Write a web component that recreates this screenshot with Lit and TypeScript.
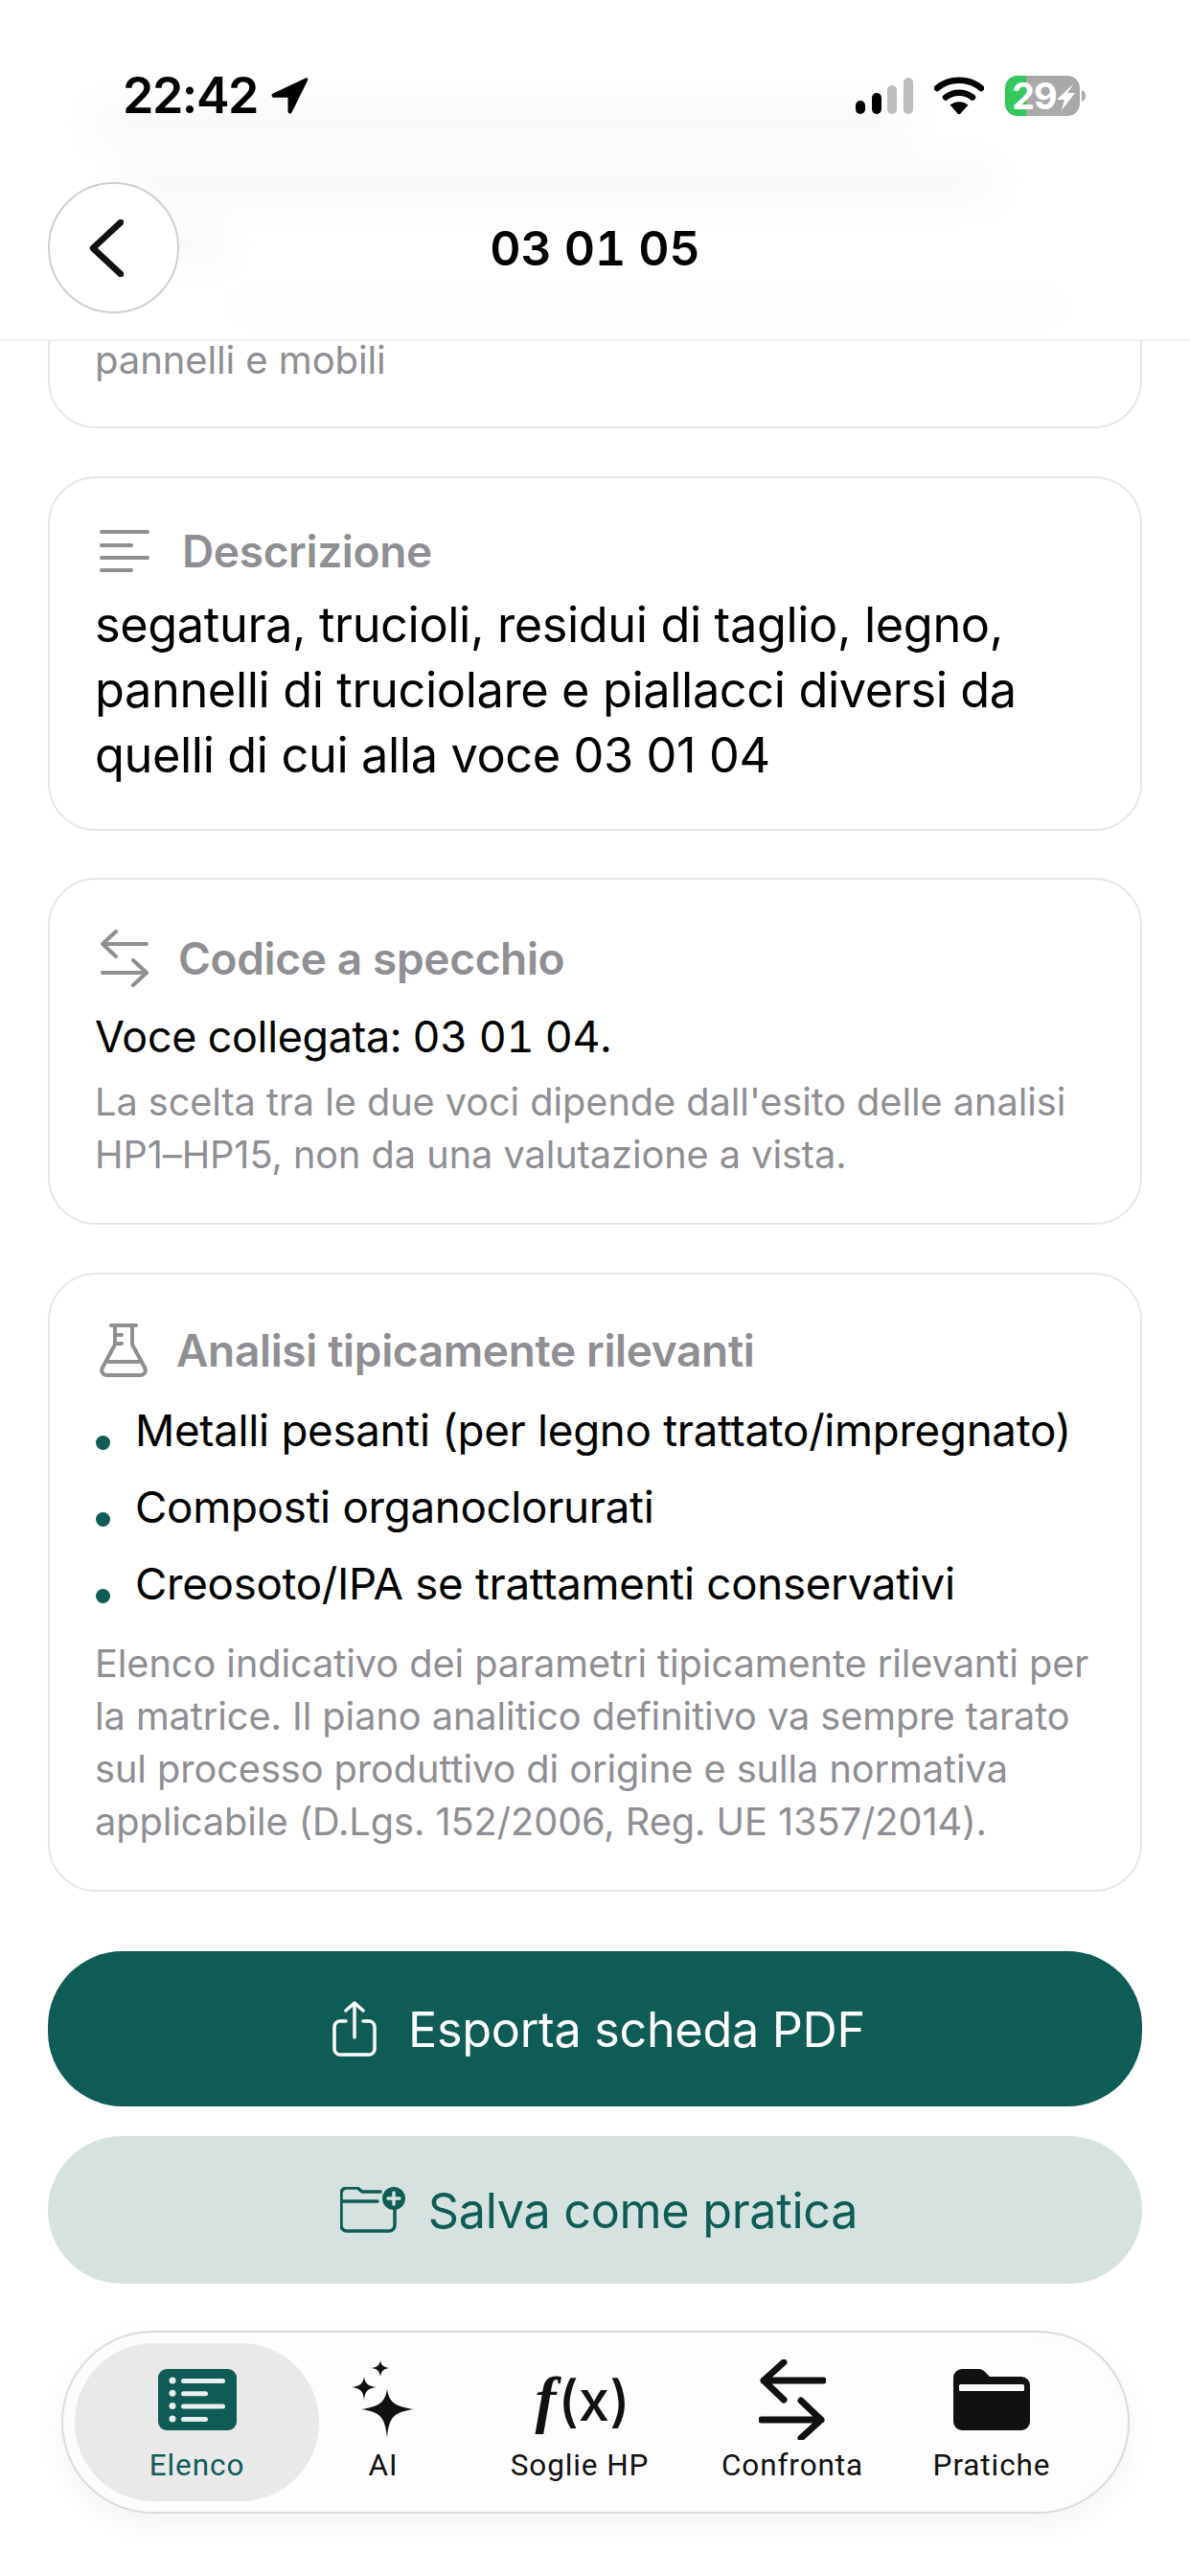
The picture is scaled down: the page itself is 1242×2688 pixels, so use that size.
import { LitElement, html, css, svg } from "lit";
import { customElement } from "lit/decorators.js";

@customElement("app-root")
export class AppRoot extends LitElement {
  static styles = css`
    :host { display: block; width: 1242px; height: 2688px; overflow: hidden; background: #fff; position: relative;
      font-family: Inter, "Liberation Sans", sans-serif; color: #000; }
    * { box-sizing: border-box; }
    svg { display: block; flex: none; }
    header { position: relative; height: 356px; border-bottom: 2px solid #eeeeef; background: #fff; overflow: hidden; }
    .ghost { position: absolute; background: rgba(0,0,0,.035); border-radius: 20px; filter: blur(20px); height: 30px; }
    .g1 { left: 95px; top: 113px; width: 860px; }
    .g2 { left: 120px; top: 175px; width: 920px; }
    .g3 { left: 100px; top: 238px; width: 140px; }
    .g4 { left: 230px; top: 305px; width: 890px; opacity: .35; }
    .status { position: relative; display: flex; justify-content: space-between; align-items: center; height: 42px; margin-top: 79px; padding: 0 109px 0 128px; }
    .time { display: flex; align-items: center; gap: 13px; font-size: 52px; font-weight: 600; letter-spacing: -1.5px; line-height: 42px; }
    .sys { display: flex; align-items: center; gap: 22px; }
    .nav { position: relative; display: grid; grid-template-columns: 137px 1fr 137px; align-items: center; margin: 69px 50px 0; }
    .back { width: 137px; height: 137px; border-radius: 50%; border: 2px solid #cfcfd2; background: rgba(255,255,255,.85); display: flex; align-items: center; justify-content: center; padding-right: 16px; }
    .title { text-align: center; font-size: 50px; font-weight: 600; letter-spacing: -.2px; font-variant-numeric: tabular-nums; }
    main { display: flex; flex-direction: column; padding: 0 50px; }
    .card { border: 2px solid #e6e6e8; border-radius: 50px; padding: 0 47px; background: #fff; }
    .stub { height: 93px; border-top: none; border-radius: 0 0 50px 50px; font-size: 40px; line-height: 43px; color: #8e8e93; margin-top: -2px; letter-spacing: -.1px; margin-bottom: 50px; }
    .c2 { height: 370px; padding-top: 44px; margin-bottom: 49px; }
    .c3 { height: 362px; padding-top: 50px; margin-bottom: 50px; }
    .c4 { height: 646px; padding-top: 47px; margin-bottom: 62px; }
    .head { display: flex; align-items: center; height: 64px; font-size: 46px; font-weight: 600; color: #8e8e93; letter-spacing: -.35px; }
    .head svg { margin-left: 5px; }
    .big { font-size: 50.5px; line-height: 68px; margin-top: 11px; letter-spacing: -.4px; white-space: nowrap; }
    .mid { font-size: 44.8px; line-height: 56px; margin-top: 22px; letter-spacing: -.3px; font-variant-numeric: tabular-nums; white-space: nowrap; }
    .small { font-size: 39.7px; line-height: 55px; color: #8e8e93; letter-spacing: -.05px; white-space: nowrap; }
    .c3 .small { margin-top: 13px; }
    ul { list-style: none; margin: 11px 0 0; padding: 0; }
    li { display: flex; height: 80px; align-items: center; font-size: 45.7px; letter-spacing: -.3px; position: relative; padding-left: 42px; }
    li::before { content: ""; position: absolute; left: 1px; top: 46px; width: 15px; height: 15px; border-radius: 50%; background: #0f5c56; }
    .c4 .small { margin-top: 17px; }
    .btn { display: flex; align-items: center; justify-content: center; border-radius: 78px; font-size: 50.3px; letter-spacing: -.3px; padding-left: 8px; }
    .primary { height: 162px; background: #0f5c56; color: #fff; gap: 33px; margin-bottom: 31px; }
    .secondary { height: 154px; background: #d5e2e0; color: #0f5c56; gap: 24px; margin-bottom: 49px; }
    .tabs { margin: 0 13px 0 14px; height: 191px; border-radius: 96px; border: 2px solid #dcdcde; display: grid; grid-template-columns: 255px 134px 276px 168px 248px; align-items: stretch; padding: 11px 0 11px 12px; background: #fdfdfd; box-shadow: 0 10px 30px rgba(0,0,0,.05), inset 0 0 24px rgba(0,0,0,.015); }
    .tab { display: flex; flex-direction: column; align-items: center; font-family: Roboto, Inter, sans-serif; font-weight: 450; font-size: 31.5px; letter-spacing: .9px; color: #111; border-radius: 82px; }
    .tab.on { background: #e9e9ea; color: #0f5c56; }
    .ico { height: 100px; display: flex; align-items: center; justify-content: center; margin-top: 9px; }
    .lab { line-height: 36px; margin-top: 1px; }
    .fx { font-size: 58px; font-family: Inter, sans-serif; font-weight: 500; letter-spacing: 0; color: #111; line-height: 1; padding-left: 6px; }
    .fx i { font-family: "Liberation Serif", serif; font-weight: 700; font-size: 66px; margin-right: 2px; }
    .b { position: relative; width: 84px; height: 42px; }
    .b29 { position: absolute; left: 7px; top: 0; line-height: 42px; font-size: 38px; font-weight: 700; color: #fff; letter-spacing: -1px; }
  `;

  render() {
    return html`
      <header>
        <div class="ghost g1"></div><div class="ghost g2"></div><div class="ghost g3"></div><div class="ghost g4"></div>
        <div class="status">
          <div class="time">22:42
            <svg width="40" height="40" viewBox="0 0 40 40"><path d="M37 1.500 3 17.500c-2.400 1.200-1.600 4.300 1 4.300h14.500V36c0 2.800 3 3.400 4.200 1L39 4c.9-1.900-.2-3.300-2-2.500Z" fill="#000"/></svg>
          </div>
          <div class="sys">
            <svg width="60" height="38" viewBox="0 0 60 38">
              <rect x="0" y="24" width="10" height="14" rx="5" fill="#000"/>
              <rect x="17" y="16" width="10" height="22" rx="5" fill="#000"/>
              <rect x="33" y="8" width="10" height="30" rx="5" fill="#bdbdbd"/>
              <rect x="50" y="0" width="10" height="38" rx="5" fill="#bdbdbd"/>
            </svg>
            <svg width="52" height="40" viewBox="0 0 52 40" fill="none">
              <path d="M3 12C16 1 36 1 49 12" stroke="#000" stroke-width="6.500" stroke-linecap="round"/>
              <path d="M12 21.500C20 15 32 15 40 21.500" stroke="#000" stroke-width="6.500" stroke-linecap="round"/>
              <path d="M16.500 29.500C22 25 30 25 35.500 29.500L27.500 38.500c-.9.9-2.100.9-3 0Z" fill="#000"/>
            </svg>
            <div class="b">
              <svg width="84" height="42" viewBox="0 0 84 42">
                <defs><clipPath id="bc"><rect width="78" height="42" rx="13"/></clipPath></defs>
                <g clip-path="url(#bc)"><rect width="78" height="42" fill="#a9a9a9"/><rect width="22" height="42" fill="#34c759"/></g>
                <path d="M80 15c3 1 4 3.500 4 6s-1 5-4 6Z" fill="#a9a9a9"/>
                <path d="M72 8 54 25h8l-3 11 14-18h-8Z" fill="#fff"/>
              </svg>
              <span class="b29">29</span>
            </div>
          </div>
        </div>
        <div class="nav">
          <div class="back">
            <svg width="36" height="60" viewBox="0 0 36 60" fill="none"><path d="M33 3 4 30l29 27" stroke="#111" stroke-width="6.500" stroke-linecap="round" stroke-linejoin="round"/></svg>
          </div>
          <div class="title">03 01 05</div>
          <div></div>
        </div>
      </header>
      <main>
        <section class="card stub">pannelli e mobili</section>
        <section class="card c2">
          <div class="head" style="gap:34px">
            <svg width="52" height="44" viewBox="0 0 52 44" stroke="#8e8e93" stroke-width="4" stroke-linecap="round"><path d="M2 2h48M2 16h31M2 29h48M2 42h31"/></svg>
            Descrizione
          </div>
          <div class="big">segatura, trucioli, residui di taglio, legno,<br>pannelli di truciolare e piallacci diversi da<br>quelli di cui alla voce 03 01 04</div>
        </section>
        <section class="card c3">
          <div class="head" style="gap:30px">
            <svg width="52" height="60" viewBox="0 0 52 60" fill="none" stroke="#8e8e93" stroke-width="4" stroke-linecap="round" stroke-linejoin="round"><path d="M17 2 3 15l14 13M3 15h46M35 32l14 13-14 13M49 45H3"/></svg>
            Codice a specchio
          </div>
          <div class="mid">Voce collegata: 03 01 04.</div>
          <div class="small">La scelta tra le due voci dipende dall'esito delle analisi<br>HP1–HP15, non da una valutazione a vista.</div>
        </section>
        <section class="card c4">
          <div class="head" style="gap:30px">
            <svg width="50" height="56" viewBox="0 0 50 56" fill="none" stroke="#8e8e93" stroke-width="4" stroke-linecap="round" stroke-linejoin="round"><path d="M12 2h26M16 2v20L3 46c-2 4 0 8 5 8h34c5 0 7-4 5-8L34 22V2M16 12h7M16 21h7M9 40h32" /></svg>
            Analisi tipicamente rilevanti
          </div>
          <ul>
            <li>Metalli pesanti (per legno trattato/impregnato)</li>
            <li>Composti organoclorurati</li>
            <li>Creosoto/IPA se trattamenti conservativi</li>
          </ul>
          <div class="small">Elenco indicativo dei parametri tipicamente rilevanti per<br>la matrice. Il piano analitico definitivo va sempre tarato<br>sul processo produttivo di origine e sulla normativa<br>applicabile (D.Lgs. 152/2006, Reg. UE 1357/2014).</div>
        </section>
        <div class="btn primary">
          <svg width="46" height="58" viewBox="0 0 46 58" fill="none" stroke="#fff" stroke-width="3.500" stroke-linecap="round" stroke-linejoin="round"><path d="M14 21H8a6 6 0 0 0-6 6v23a6 6 0 0 0 6 6h30a6 6 0 0 0 6-6V27a6 6 0 0 0-6-6h-6M23 38V2M14 10l9-8 9 8"/></svg>
          Esporta scheda PDF
        </div>
        <div class="btn secondary">
          <svg width="68" height="48" viewBox="0 0 68 48" fill="none">
            <path d="M42 5H23l-5-4H7a6 6 0 0 0-6 6v33a6 6 0 0 0 6 6h44a6 6 0 0 0 6-6V24M1 15h38" stroke="#0f5c56" stroke-width="3.500" stroke-linecap="round" stroke-linejoin="round"/>
            <circle cx="56" cy="12" r="12" fill="#0f5c56"/>
            <path d="M56 6v12M50 12h12" stroke="#d5e2e0" stroke-width="3.500" stroke-linecap="round"/>
          </svg>
          Salva come pratica
        </div>
        <nav class="tabs">
          <div class="tab on">
            <div class="ico">
              <svg width="82" height="64" viewBox="0 0 82 64">
                <rect width="82" height="64" rx="9" fill="#0f5c56"/>
                ${[0, 1, 2, 3].map((i) => svg`<circle cx="15" cy="${12 + i * 13.3}" r="3.500" fill="#e9eeee"/><rect x="24" y="${10 + i * 13.3}" width="${i % 2 ? 28 : 46}" height="5" rx="2.500" fill="#e9eeee"/>`)}
              </svg>
            </div>
            <div class="lab">Elenco</div>
          </div>
          <div class="tab">
            <div class="ico">
              <svg width="66" height="82" viewBox="0 0 66 82" fill="#111">
                <path d="M37 30c2 13 7 18 28 21-21 3-26 8-28 30-2-22-7-27-27-30 20-3 25-8 27-21Z"/>
                <path d="M13 17c1 7 4 10 13 11-9 1-12 4-13 13-1-9-4-12-13-13 9-1 12-4 13-11Z"/>
                <path d="M30 0c1 5 3 7 9 8-6 1-8 3-9 9-1-6-3-8-9-9 6-1 8-3 9-8Z"/>
              </svg>
            </div>
            <div class="lab">AI</div>
          </div>
          <div class="tab">
            <div class="ico fx"><span><i>f</i>(x)</span></div>
            <div class="lab">Soglie HP</div>
          </div>
          <div class="tab">
            <div class="ico">
              <svg width="70" height="84" viewBox="0 0 70 84" fill="none" stroke="#111" stroke-width="7" stroke-linecap="round" stroke-linejoin="round"><path d="M26 3 5 22l21 20M5 22h62M44 43l21 20-21 19M65 63H3"/></svg>
            </div>
            <div class="lab">Confronta</div>
          </div>
          <div class="tab">
            <div class="ico">
              <svg width="80" height="64" viewBox="0 0 80 64">
                <path d="M9 0h17c4 0 6 2 8 4l4 4h33a9 9 0 0 1 9 9v38a9 9 0 0 1-9 9H9a9 9 0 0 1-9-9V9a9 9 0 0 1 9-9Z" fill="#111"/>
                <rect x="6" y="16" width="68" height="7" rx="1.500" fill="#fdfdfd"/>
              </svg>
            </div>
            <div class="lab">Pratiche</div>
          </div>
        </nav>
      </main>
    `;
  }
}
